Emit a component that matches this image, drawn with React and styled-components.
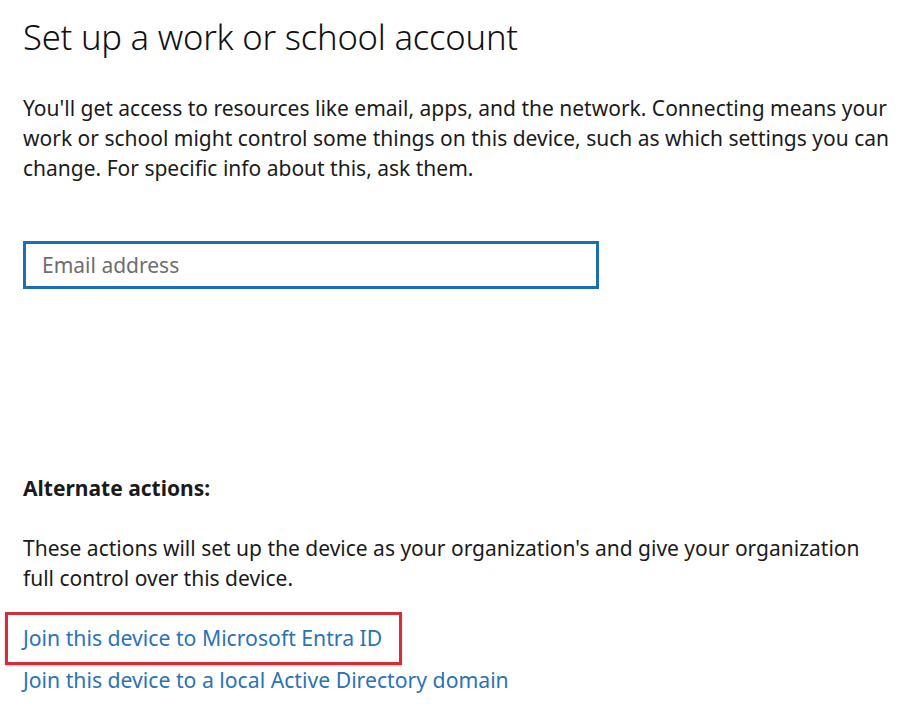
import React from "react";
import styled, { createGlobalStyle } from "styled-components";

const Global = createGlobalStyle`
  html, body { margin: 0; padding: 0; background: #ffffff; }
  body { font-family: "Noto Sans", "Open Sans", sans-serif; color: #1a1a1a; }
`;

const Page = styled.div`
  padding: 12px 0 0 23px;
  width: 891px;
  box-sizing: border-box;
`;

const Title = styled.h1`
  margin: 0;
  font-size: 34.6px;
  font-weight: 300;
  line-height: 50px;
  color: #111;
  letter-spacing: -0.2px;
`;

const Para = styled.p`
  margin: ${(p) => p.$mt || "0"} 0 0 0;
  font-size: 21px;
  line-height: 30px;
  color: #1b1b1b;
`;

const Input = styled.div`
  margin-top: 58px;
  width: 576px;
  height: 48px;
  box-sizing: border-box;
  border: 3px solid #1a6fb3;
  display: flex;
  align-items: center;
  padding-left: 16px;
  font-size: 21px;
  color: #6e6e6e;
`;

const Heading = styled.div`
  margin-top: 184px;
  font-size: 21px;
  font-weight: 700;
  line-height: 30px;
`;

const Links = styled.div`
  margin-top: 24px;
  display: flex;
  flex-direction: column;
  align-items: flex-start;
`;

const LinkRow = styled.div`
  position: relative;
  font-size: 21.2px;
  line-height: 42px;
  color: #2a73b8;
`;

const Highlight = styled.span`
  position: absolute;
  left: -18px;
  right: -20px;
  top: -5px;
  bottom: -6px;
  border: 3px solid #d1303b;
  box-shadow: 0 1px 2px rgba(0,0,0,0.25);
  pointer-events: none;
`;

export default function App() {
  return (
    <>
      <Global />
      <Page>
        <Title>Set up a work or school account</Title>
        <Para $mt="31px">
          You'll get access to resources like email, apps, and the network. Connecting means your work or school might control some things on this device, such as which settings you can change. For specific info about this, ask them.
        </Para>
        <Input>Email address</Input>
        <Heading>Alternate actions:</Heading>
        <Para $mt="30px">
          These actions will set up the device as your organization's and give your organization full control over this device.
        </Para>
        <Links>
          <LinkRow>
            Join this device to Microsoft Entra ID
            <Highlight />
          </LinkRow>
          <LinkRow>Join this device to a local Active Directory domain</LinkRow>
        </Links>
      </Page>
    </>
  );
}
